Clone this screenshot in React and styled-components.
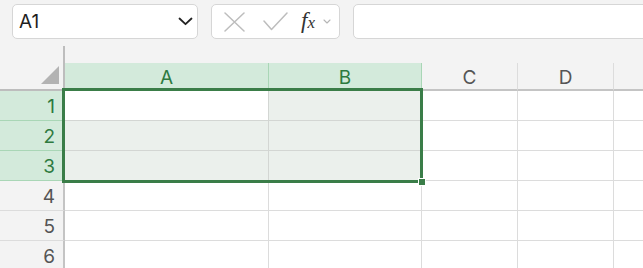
import React from "react";
import styled, { createGlobalStyle } from "styled-components";

const Global = createGlobalStyle`
  html, body { margin: 0; padding: 0; background: #f3f3f3; }
  body { font-family: Inter, "Noto Sans", sans-serif; }
`;

const GREEN = "#3a7d48";
const GREEN_TEXT = "#2e7a3f";
const GREEN_BG = "#d3eadb";
const GREEN_LINE = "#a9d6b6";
const GRID = "#dcdcdc";

const Page = styled.div`
  width: 643px;
  height: 268px;
  overflow: hidden;
  background: #f3f3f3;
`;

const Toolbar = styled.div`
  display: flex;
  gap: 13px;
  height: 46px;
  padding: 4px 0 0 12px;
  box-sizing: border-box;
`;

const Box = styled.div`
  box-sizing: border-box;
  height: 35px;
  background: #fff;
  border: 1px solid #d6d6d6;
  border-radius: 5px;
  display: flex;
  align-items: center;
`;

const NameBox = styled(Box)`
  width: 186px;
  padding: 0 4px 0 6px;
  justify-content: space-between;
  font-size: 19px;
  color: #1f1f1f;
`;

const FormulaButtons = styled(Box)`
  width: 129px;
  padding: 0 0 0 12px;
  gap: 18px;
`;

const FormulaInput = styled(Box)`
  flex: 1;
  margin-right: -10px;
`;

const Fx = styled.span`
  font-family: "Liberation Serif", serif;
  font-style: italic;
  font-size: 23px;
  color: #333;
  display: flex;
  align-items: baseline;
  margin-left: -5px;
  margin-top: -2px;
  & > sub {
    font-size: 17px;
    margin-left: 0px;
    vertical-align: -4px;
  }
`;

const Sheet = styled.div`
  position: relative;
`;

const HeaderRow = styled.div`
  display: flex;
  height: 45px;
`;

const Corner = styled.div`
  position: relative;
  width: 65px;
  flex: none;
  box-sizing: border-box;
  border-right: 2px solid #bdbdbd;
  border-bottom: 2px solid #bdbdbd;
`;

const Triangle = styled.div`
  position: absolute;
  right: 4px;
  bottom: 5px;
  width: 0;
  height: 0;
  border-left: 18px solid transparent;
  border-bottom: 18px solid #b3b3b3;
`;

const ColHeaders = styled.div`
  display: flex;
  flex: 1;
  margin-top: 17px;
`;

const ColHeader = styled.div`
  box-sizing: border-box;
  width: ${(p) => (p.$w ? p.$w + "px" : "auto")};
  flex: ${(p) => (p.$w ? "none" : "1")};
  background: ${(p) => (p.$sel ? GREEN_BG : "#f3f3f3")};
  color: ${(p) => (p.$sel ? GREEN_TEXT : "#555")};
  border-right: 1px solid ${(p) => (p.$sel ? GREEN_LINE : GRID)};
  border-bottom: 2px solid ${(p) => (p.$sel ? GREEN : "#c4c4c4")};
  font-size: 19px;
  display: flex;
  align-items: center;
  justify-content: center;
  padding-top: 3px;
  &:last-child { border-right: none; }
`;

const Row = styled.div`
  display: flex;
  height: 30px;
`;

const RowHeader = styled.div`
  width: 65px;
  flex: none;
  box-sizing: border-box;
  background: ${(p) => (p.$sel ? GREEN_BG : "#f3f3f3")};
  color: ${(p) => (p.$sel ? GREEN_TEXT : "#555")};
  border-right: 2px solid ${(p) => (p.$sel ? GREEN : "#c4c4c4")};
  border-bottom: 1px solid ${(p) => (p.$sel ? GREEN_LINE : GRID)};
  font-size: 19px;
  display: flex;
  align-items: center;
  justify-content: flex-end;
  padding: 1px 8px 0 0;
`;

const Cell = styled.div`
  box-sizing: border-box;
  width: ${(p) => (p.$w ? p.$w + "px" : "auto")};
  flex: ${(p) => (p.$w ? "none" : "1")};
  background: ${(p) => (p.$sel ? (p.$active ? "#fff" : "#ebf0ec") : "#fff")};
  border-right: 1px solid ${(p) => (p.$sel ? "#d3d6d3" : GRID)};
  border-bottom: 1px solid ${(p) => (p.$sel ? "#d3d6d3" : GRID)};
  &:last-child { border-right: none; }
`;

const Selection = styled.div`
  position: absolute;
  left: 62px;
  top: 42px;
  width: 361px;
  height: 95px;
  box-sizing: border-box;
  border: 3px solid ${GREEN};
  pointer-events: none;
`;

const FillHandle = styled.div`
  position: absolute;
  left: 418px;
  top: 132px;
  width: 6px;
  height: 6px;
  background: ${GREEN};
  border: 1px solid #fff;
`;

const cols = [
  { name: "A", w: 204, sel: true },
  { name: "B", w: 153, sel: true },
  { name: "C", w: 96 },
  { name: "D", w: 96 },
  { name: "", w: 0 },
];

const Chevron = () => (
  <svg width="15" height="9" viewBox="0 0 15 9" fill="none">
    <path d="M1.5 1.5 L7.5 7.2 L13.5 1.5" stroke="#222" strokeWidth="1.8" strokeLinecap="round" strokeLinejoin="round" />
  </svg>
);

const XIcon = () => (
  <svg width="21" height="20" viewBox="0 0 21 20" fill="none">
    <path d="M1 1 L20 19 M20 1 L1 19" stroke="#bdbdbd" strokeWidth="1.5" strokeLinecap="round" />
  </svg>
);

const CheckIcon = () => (
  <svg width="25" height="19" viewBox="0 0 25 19" fill="none">
    <path d="M1 9 L8.5 17.5 L24 1" stroke="#bdbdbd" strokeWidth="1.5" strokeLinecap="round" strokeLinejoin="round" />
  </svg>
);

const SmallChevron = () => (
  <svg width="8" height="5" viewBox="0 0 8 5" fill="none" style={{ marginLeft: -10 }}>
    <path d="M1 1 L4 4 L7 1" stroke="#b5b5b5" strokeWidth="1.1" strokeLinecap="round" strokeLinejoin="round" />
  </svg>
);

export default function App() {
  const rows = [1, 2, 3, 4, 5, 6];
  return (
    <Page>
      <Global />
      <Toolbar>
        <NameBox>
          <span>A1</span>
          <Chevron />
        </NameBox>
        <FormulaButtons>
          <XIcon />
          <CheckIcon />
          <Fx>
            f<sub>x</sub>
          </Fx>
          <SmallChevron />
        </FormulaButtons>
        <FormulaInput />
      </Toolbar>
      <Sheet>
        <HeaderRow>
          <Corner>
            <Triangle />
          </Corner>
          <ColHeaders>
            {cols.map((c, i) => (
              <ColHeader key={i} $w={c.w} $sel={c.sel}>
                {c.name}
              </ColHeader>
            ))}
          </ColHeaders>
        </HeaderRow>
        {rows.map((r) => {
          const rSel = r <= 3;
          return (
            <Row key={r}>
              <RowHeader $sel={rSel}>{r}</RowHeader>
              {cols.map((c, i) => (
                <Cell
                  key={i}
                  $w={c.w}
                  $sel={rSel && c.sel}
                  $active={r === 1 && i === 0}
                />
              ))}
            </Row>
          );
        })}
        <Selection />
        <FillHandle />
      </Sheet>
    </Page>
  );
}
